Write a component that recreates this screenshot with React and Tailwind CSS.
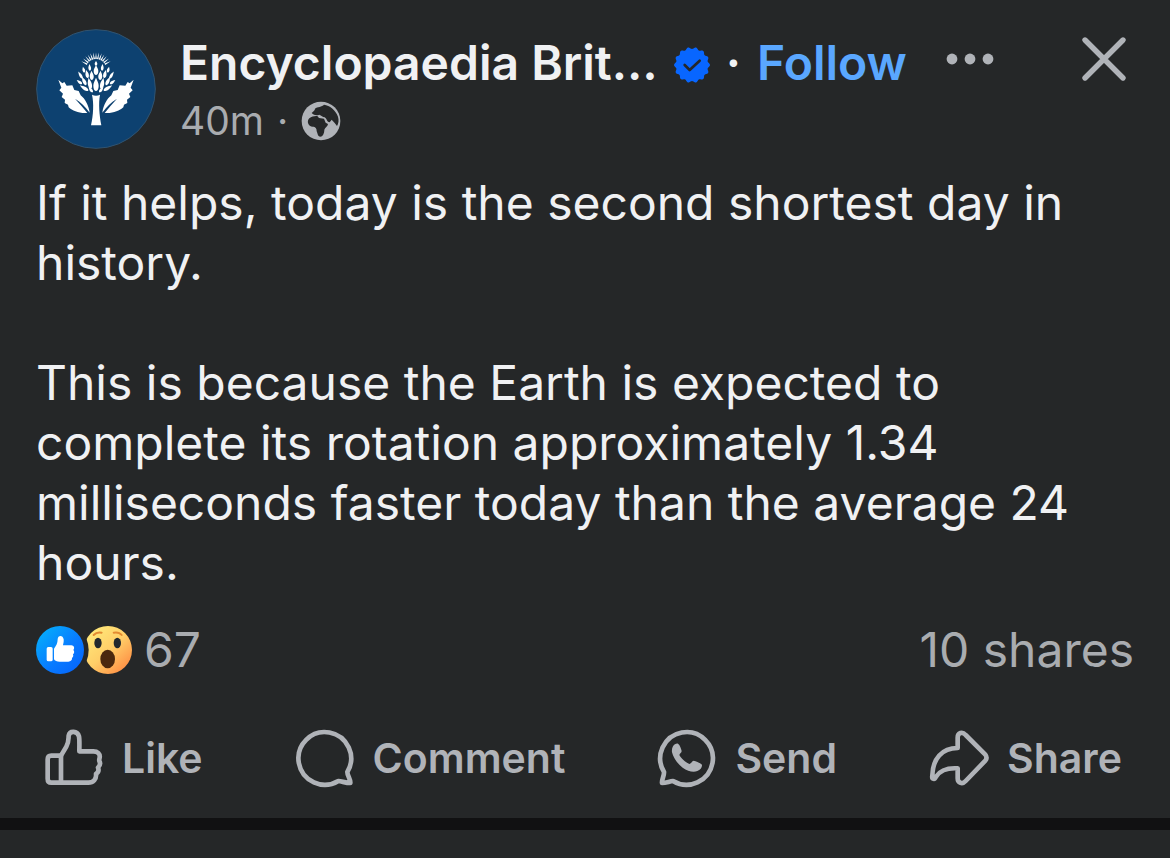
import React from "react";

const PETALS = [
  [210, 150, 0, 7, 15],
  [191, 142, -6, 4, 10],
  [229, 142, 6, 4, 10],
  [173, 149, -14, 4, 9],
  [247, 149, 14, 4, 9],
  [197, 166, -4, 6, 14],
  [223, 166, 4, 6, 14],
  [183, 162, -12, 5, 12],
  [237, 162, 12, 5, 12],
  [163, 165, -32, 4, 12],
  [257, 165, 32, 4, 12],
  [210, 193, 0, 8, 20],
  [191, 190, -12, 6, 17],
  [229, 190, 12, 6, 17],
  [174, 183, -26, 5, 14],
  [246, 183, 26, 5, 14],
  [160, 186, -52, 4, 10],
  [260, 186, 52, 4, 10],
  [174, 204, -58, 5, 15],
  [246, 204, 58, 5, 15],
  [194, 209, -38, 4, 10],
  [226, 209, 38, 4, 10],
  [210, 130, 0, 4, 7],
];

const SPIKES = [-62, -51, -40, -30, -20, -10, 0, 10, 20, 30, 40, 51, 62];

function Avatar() {
  return (
    <svg viewBox="30 27 360 360" className="size-[120px] shrink-0" role="img" aria-label="Encyclopaedia Britannica">
      <circle cx="210" cy="207" r="178" fill="#0d4170" stroke="#31536f" strokeWidth="3" />
      <g fill="#fff">
        {PETALS.map(([x, y, a, w, h]) => (
          <path
            key={`${x}-${y}`}
            transform={`translate(${x} ${y}) rotate(${a})`}
            d={`M0 ${-h}C${w * 0.5} ${-h * 0.5} ${w} ${-h * 0.2} ${w} ${h * 0.2}C${w} ${h * 0.7} ${w * 0.5} ${h} 0 ${h}C${-w * 0.5} ${h} ${-w} ${h * 0.7} ${-w} ${h * 0.2}C${-w} ${-h * 0.2} ${-w * 0.5} ${-h * 0.5} 0 ${-h}Z`}
          />
        ))}
        {SPIKES.map((a) => (
          <path key={a} transform={`translate(210 147) rotate(${a})`} d="M-2.4 -30L0 -50L2.4 -30Z" />
        ))}
        <path d="M198 224Q210 230 222 224C217 250 220 285 226 316H195C202 285 204 250 198 224Z" />
        <path d="M97 179L109 190L115 186L122 197L139 196L145 210L158 213L164 226C177 236 188 256 191 278C178 260 164 246 147 236C160 250 172 264 184 279C160 281 140 273 128 262L126 254L116 249L117 239L107 231L111 221L100 211L106 203Z" />
        <path d="M323 179L311 190L305 186L298 197L281 196L275 210L262 213L256 226C243 236 232 256 229 278C242 260 256 246 273 236C260 250 248 264 236 279C260 281 280 273 292 262L294 254L304 249L303 239L313 231L309 221L320 211L314 203Z" />
      </g>
    </svg>
  );
}

function VerifiedBadge() {
  const points = Array.from({ length: 144 }, (_, i) => {
    const t = (i / 144) * Math.PI * 2;
    const r = 51 + 3 * Math.cos(14 * t);
    return `${(54 + r * Math.cos(t)).toFixed(1)},${(54 + r * Math.sin(t)).toFixed(1)}`;
  }).join(" ");
  return (
    <svg viewBox="0 0 108 108" className="size-9 shrink-0" role="img" aria-label="Verified account">
      <polygon points={points} fill="#0866ff" />
      <path d="M32 54L47 69L77 41" fill="none" stroke="#252728" strokeWidth="8" strokeLinecap="round" strokeLinejoin="round" />
    </svg>
  );
}

function GlobeIcon() {
  return (
    <svg viewBox="395 33 120 120" className="size-10 shrink-0" role="img" aria-label="Public">
      <circle cx="455" cy="93" r="58" fill="#b0b3b8" />
      <g fill="#252728">
        <path d="M427 69C431 64 437 62 437 56C444 50 458 51 464 44C481 46 499 60 506 80C509 90 508 101 503 108L496 99L487 89L481 97L476 95C471 91 472 85 466 82C460 82 456 76 450 74C442 77 434 76 427 69Z" />
        <path d="M420 85C427 79 437 77 444 78L449 84L464 86L469 98L476 102C475 110 467 113 465 119C465 130 460 140 453 140C445 140 445 130 442 124C442 116 439 111 433 110C425 111 418 107 416 99C415 94 416 89 420 85Z" />
      </g>
    </svg>
  );
}

function LikeReaction() {
  return (
    <svg viewBox="30 30 144 144" className="z-10 size-12 shrink-0" aria-hidden="true">
      <defs>
        <linearGradient id="likeFill" x1="0" y1="0" x2="1" y2="1">
          <stop offset="0.1" stopColor="#05acfb" />
          <stop offset="0.55" stopColor="#087cff" />
          <stop offset="1" stopColor="#0560fb" />
        </linearGradient>
      </defs>
      <circle cx="102" cy="102" r="72" fill="url(#likeFill)" />
      <g fill="#fff">
        <rect x="62" y="93" width="18" height="43" rx="5" />
        <path d="M84 98C90 90 95 82 95 70C95 57 111 56 113 70C114 78 111 85 111 88H136C144 88 147 97 142 102C146 106 145 112 141 115C143 120 141 124 138 126C139 132 134 137 127 137H101C93 137 86 134 84 130Z" />
      </g>
    </svg>
  );
}

function WowReaction() {
  return (
    <svg viewBox="174 30 144 144" className="size-12 shrink-0" aria-hidden="true">
      <defs>
        <linearGradient id="wowFill" x1="0.15" y1="0.1" x2="0.9" y2="0.9">
          <stop offset="0" stopColor="#ffe879" />
          <stop offset="0.5" stopColor="#ffce68" />
          <stop offset="1" stopColor="#ff8d43" />
        </linearGradient>
        <mask id="wowCut">
          <rect x="170" y="26" width="152" height="152" fill="#fff" />
          <circle cx="102" cy="102" r="86" fill="#000" />
        </mask>
      </defs>
      <circle cx="246" cy="102" r="72" fill="url(#wowFill)" mask="url(#wowCut)" />
      <g fill="none" stroke="#e38b32" strokeWidth="6" strokeLinecap="round">
        <path d="M203 57Q212 47 227 50" />
        <path d="M263 50Q279 47 287 57" />
      </g>
      <ellipse cx="216" cy="81" rx="11" ry="16" fill="#22282d" />
      <ellipse cx="274" cy="81" rx="11" ry="16" fill="#22282d" />
      <ellipse cx="245" cy="129" rx="22" ry="28" fill="#4b280e" />
    </svg>
  );
}

const lineIcon = {
  fill: "none",
  stroke: "currentColor",
  strokeWidth: 14,
  strokeLinecap: "round",
  strokeLinejoin: "round",
  className: "size-15 shrink-0",
  "aria-hidden": true,
};

function LikeIcon() {
  return (
    <svg viewBox="24 24 180 180" {...lineIcon}>
      <path d="M75 107H46Q35 107 35 118V176Q35 188 46 188H75Z" />
      <path d="M75 107L91 80C99 66 97 56 98 47C101 31 124 32 129 49C131 60 130 78 130 94H172C185 94 193 102 191 113C190 118 189 119 190 123C194 130 192 137 186 143C189 150 187 157 180 162C182 177 172 188 157 188H75" />
    </svg>
  );
}

function CommentIcon() {
  return (
    <svg viewBox="27 24 180 180" {...lineIcon}>
      <path d="M184 156A79 79 0 1 0 157 183C168 184 179 189 193 189C194 177 184 168 184 156Z" />
    </svg>
  );
}

function SendIcon() {
  return (
    <svg viewBox="24 24 180 180" {...lineIcon}>
      <path d="M45 156A79 79 0 1 1 72 183C61 184 52 189 39 189C38 177 46 168 45 156Z" />
      <path
        d="M72 79C76 73 81 70 87 71C93 75 96 85 98 93C98 98 92 101 91 105C96 115 109 127 121 132C126 131 129 123 134 122C142 123 152 128 159 134C160 142 154 150 145 153C132 158 116 153 101 143C86 132 73 114 69 97C68 91 69 84 72 79Z"
        fill="currentColor"
        stroke="none"
      />
    </svg>
  );
}

function ShareIcon() {
  return (
    <svg viewBox="36 24 180 180" {...lineIcon}>
      <path d="M122 84V53C122 38 136 34 146 45L205 104Q212 113 205 122L146 183C136 194 122 189 122 175V145C92 143 70 150 57 170C53 180 44 178 46 167C47 116 75 84 122 84Z" />
    </svg>
  );
}

const ACTIONS = [
  ["Like", LikeIcon],
  ["Comment", CommentIcon],
  ["Send", SendIcon],
  ["Share", ShareIcon],
];

export default function App() {
  return (
    <main className="min-h-screen bg-[#252728] font-['Inter','Liberation_Sans',sans-serif] text-[#f0f1f3]">
      <article className="border-b-12 border-[#111112]">
        <header className="flex items-start gap-6 px-9 pt-[29px]">
          <Avatar />
          <div className="min-w-0 flex-1">
            <div className="flex items-center">
              <h1 className="truncate text-5xl leading-[68px] font-semibold">Encyclopaedia Brit…</h1>
              <div className="ml-4 flex items-center gap-4 text-5xl leading-[68px] font-semibold">
                <span className="pt-1">
                  <VerifiedBadge />
                </span>
                <span>·</span>
                <button type="button" className="text-[#5aa7ff]">Follow</button>
              </div>
              <button type="button" aria-label="More options" className="ml-9 shrink-0 text-[#b0b3b8]">
                <svg viewBox="0 0 54 30" className="h-[30px] w-[54px]" fill="currentColor" aria-hidden="true">
                  <circle cx="9" cy="11" r="5.4" />
                  <circle cx="27" cy="11" r="5.4" />
                  <circle cx="45" cy="11" r="5.4" />
                </svg>
              </button>
              <button type="button" aria-label="Close" className="ml-auto shrink-0 text-[#b0b3b8]">
                <svg viewBox="0 0 60 60" className="size-15" fill="none" stroke="currentColor" strokeWidth="5.4" strokeLinecap="round" aria-hidden="true">
                  <path d="M11 7L49 45M49 7L11 45" />
                </svg>
              </button>
            </div>
            <div className="flex items-center gap-[13px] text-[39px] leading-12 text-[#a9acb0]">
              <time>40m</time>
              <span>·</span>
              <GlobeIcon />
            </div>
          </div>
        </header>

        <div className="px-9 pt-6 text-5xl leading-[60px]">
          <p>If it helps, today is the second shortest day in history.</p>
          <p className="pt-[60px]">
            This is because the Earth is expected to complete its rotation approximately 1.34 milliseconds faster today than the average 24 hours.
          </p>
        </div>

        <div className="flex items-center justify-between px-9 pt-[27px] text-5xl leading-[60px] text-[#a9acb0]">
          <div className="flex items-center">
            <LikeReaction />
            <WowReaction />
            <span className="ml-3">67</span>
          </div>
          <span>10 shares</span>
        </div>

        <div className="flex items-center justify-between pt-12 pr-12 pb-[30px] pl-11">
          {ACTIONS.map(([label, Icon]) => (
            <button key={label} type="button" className="flex items-center gap-[18px] text-[41px] leading-[60px] font-semibold text-[#b0b3b8]">
              <Icon />
              {label}
            </button>
          ))}
        </div>
      </article>
    </main>
  );
}
